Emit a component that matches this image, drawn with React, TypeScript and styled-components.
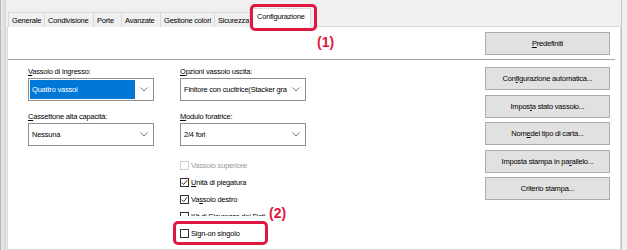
import React from "react";
import styled, { createGlobalStyle } from "styled-components";

const Red = "#e0173f";

type Tab = { label: string; width: number };

const tabs: Tab[] = [
  { label: "Generale", width: 37 },
  { label: "Condivisione", width: 50 },
  { label: "Porte", width: 29 },
  { label: "Avanzate", width: 40 },
  { label: "Gestione colori", width: 55 },
  { label: "Sicurezza", width: 39 },
];

const sideButtons: [string, string, string][] = [
  ["Con", "f", "igurazione automatica..."],
  ["Impos", "t", "a stato vassoio..."],
  ["Nom", "e", " del tipo di carta..."],
  ["Imposta stampa in pa", "r", "allelo..."],
  ["", "", "Criterio stampa..."],
];

const GlobalStyle = createGlobalStyle`
  html, body {
    margin: 0;
    padding: 0;
    background: #f0f0f0;
  }
`;

const Chevron = () => (
  <svg width="8" height="5" viewBox="0 0 8 5">
    <polyline points="0.5,0.5 4,4 7.5,0.5" fill="none" stroke="#707070" strokeWidth="0.9" />
  </svg>
);

const Tick = ({ color }: { color: string }) => (
  <svg width="7" height="7" viewBox="0 0 7 7">
    <polyline points="0.8,3.6 2.6,5.5 6.3,1.2" fill="none" stroke={color} strokeWidth="1" />
  </svg>
);

type SelectProps = { value: string; highlighted?: boolean };

const Select = ({ value, highlighted }: SelectProps) => (
  <SelectBox>
    <SelectValue $highlighted={highlighted}>{value}</SelectValue>
    <SelectArrow>
      <Chevron />
    </SelectArrow>
  </SelectBox>
);

type CheckProps = { children: React.ReactNode; checked?: boolean; disabled?: boolean };

const Check = ({ children, checked, disabled }: CheckProps) => (
  <CheckRow $disabled={disabled}>
    <CheckBox $disabled={disabled}>{checked && <Tick color="#333" />}</CheckBox>
    <span>{children}</span>
  </CheckRow>
);

const App = () => {
  return (
    <Screen>
      <GlobalStyle />
      <LeftEdge />
      <Dialog>
        <TabStrip>
          {tabs.map((t) => (
            <TabItem key={t.label} $width={t.width}>
              {t.label}
            </TabItem>
          ))}
          <ActiveTab>Configurazione</ActiveTab>
        </TabStrip>
        <Panel>
          <TopBar>
            <Button>
              <u>P</u>redefiniti
            </Button>
          </TopBar>
          <Separator />
          <Body>
            <Column>
              <Field>
                <FieldLabel>
                  <u>V</u>assoio di ingresso:
                </FieldLabel>
                <Select value="Quattro vassoi" highlighted />
              </Field>
              <Field>
                <FieldLabel>
                  <u>C</u>assettone alta capacità:
                </FieldLabel>
                <Select value="Nessuna" />
              </Field>
            </Column>
            <Column $offset>
              <Field>
                <FieldLabel>
                  <u>O</u>pzioni vassoio uscita:
                </FieldLabel>
                <Select value="Finitore con cucitrice(Stacker grande)" />
              </Field>
              <Field>
                <FieldLabel>
                  <u>M</u>odulo foratrice:
                </FieldLabel>
                <Select value="2/4 fori" />
              </Field>
              <CheckList>
                <Check disabled>Vassoio superiore</Check>
                <Check checked>
                  <u>U</u>nità di piegatura
                </Check>
                <Check checked>
                  Va<u>s</u>soio destro
                </Check>
                <ClippedRow>
                  <Check>Kit di Sicurezza dei Dati</Check>
                </ClippedRow>
                <Check>Sign-on singolo</Check>
              </CheckList>
            </Column>
            <ButtonColumn>
              {sideButtons.map(([a, key, b]) => (
                <Button key={a + b}>
                  {a}
                  {key && <u>{key}</u>}
                  {b}
                </Button>
              ))}
            </ButtonColumn>
          </Body>
        </Panel>
      </Dialog>
      <RightEdge />

      <Callout $left={250} $top={4} $width={67} $height={27} />
      <CalloutNumber $left={317} $top={34}>(1)</CalloutNumber>
      <Callout $left={173} $top={221} $width={95} $height={24} />
      <CalloutNumber $left={269} $top={205}>(2)</CalloutNumber>
    </Screen>
  );
};

const Screen = styled.div`
  position: relative;
  width: 627px;
  height: 250px;
  overflow: hidden;
  display: flex;
  background: #f0f0f0;
  font-family: "Liberation Sans", Arial, sans-serif;
  font-size: 7.5px;
  letter-spacing: -0.2px;
  color: #000;
`;

const LeftEdge = styled.div`
  width: 6px;
  flex: none;
  box-sizing: border-box;
  border-left: 1px solid #b8b8b8;
  border-right: 1px solid #d4d4d4;
  background: linear-gradient(90deg, #e9e9e9, #dcdcdc);
`;

const RightEdge = styled.div`
  width: 6px;
  flex: none;
  box-sizing: border-box;
  border-left: 1px solid #c6c6c6;
`;

const Dialog = styled.div`
  flex: 1;
  display: flex;
  flex-direction: column;
  padding: 12px 0 0 1px;
  min-width: 0;
`;

const TabStrip = styled.div`
  position: relative;
  z-index: 1;
  display: flex;
  align-items: flex-end;
  height: 15px;
  margin: 0 0 -1px 1px;
`;

const TabItem = styled.div<{ $width: number }>`
  box-sizing: border-box;
  width: ${(p) => p.$width}px;
  height: 15px;
  margin-right: -1px;
  padding-left: 3px;
  display: flex;
  align-items: center;
  white-space: nowrap;
  overflow: hidden;
  background: #f0f0f0;
  border: 1px solid #d9d9d9;
  border-bottom: none;

  &:last-child {
    padding-left: 5px;
  }
`;

const ActiveTab = styled.div`
  position: relative;
  z-index: 2;
  box-sizing: border-box;
  width: 62px;
  height: 19px;
  margin-left: -3px;
  padding: 0 0 3px 7px;
  display: flex;
  align-items: center;
  white-space: nowrap;
  background: #fff;
  border: 1px solid #d9d9d9;
  border-bottom: none;
`;

const Panel = styled.div`
  flex: 1;
  display: flex;
  flex-direction: column;
  background: #fff;
  border: 1px solid #d9d9d9;
`;

const TopBar = styled.div`
  height: 32px;
  box-sizing: border-box;
  display: flex;
  justify-content: flex-end;
  align-items: flex-start;
  padding: 5px 10px 0 0;
`;

const Separator = styled.div`
  height: 1px;
  margin-right: 5px;
  background: #a8a8a8;
`;

const Body = styled.div`
  display: flex;
  align-items: flex-start;
  padding: 7px 10px 0 20px;
`;

const Column = styled.div<{ $offset?: boolean }>`
  width: 126px;
  display: flex;
  flex-direction: column;
  gap: 11px;
  margin-left: ${(p) => (p.$offset ? "26px" : "0")};
`;

const Field = styled.div`
  display: flex;
  flex-direction: column;
  gap: 1px;
`;

const FieldLabel = styled.div`
  height: 10px;
  line-height: 10px;
  white-space: nowrap;
`;

const SelectBox = styled.div`
  height: 23px;
  box-sizing: border-box;
  display: flex;
  padding: 1px;
  border: 1px solid #8e8e8e;
  background: #fff;
`;

const SelectValue = styled.div<{ $highlighted?: boolean }>`
  flex: 1;
  min-width: 0;
  display: flex;
  align-items: center;
  padding-left: 2px;
  white-space: nowrap;
  overflow: hidden;
  background: ${(p) => (p.$highlighted ? "#0078d7" : "transparent")};
  color: ${(p) => (p.$highlighted ? "#fff" : "#000")};
`;

const SelectArrow = styled.div`
  width: 17px;
  flex: none;
  display: flex;
  align-items: center;
  justify-content: center;
`;

const CheckList = styled.div`
  display: flex;
  flex-direction: column;
`;

const CheckRow = styled.div<{ $disabled?: boolean }>`
  height: 17px;
  flex: none;
  display: flex;
  align-items: center;
  gap: 2px;
  white-space: nowrap;
  color: ${(p) => (p.$disabled ? "#9a9a9a" : "#000")};
`;

const CheckBox = styled.span<{ $disabled?: boolean }>`
  width: 9px;
  height: 9px;
  box-sizing: border-box;
  display: flex;
  align-items: center;
  justify-content: center;
  border: 1px solid ${(p) => (p.$disabled ? "#cfcfcf" : "#333")};
  background: #fff;
`;

/* the row is half hidden behind the next one in the original dialog */
const ClippedRow = styled.div`
  height: 17px;
  flex: none;
  overflow: hidden;

  & > * {
    clip-path: inset(0 0 9px 0);
  }
`;

const ButtonColumn = styled.div`
  margin-left: auto;
  width: 125px;
  display: flex;
  flex-direction: column;
  gap: 4.5px;
`;

const Button = styled.div`
  width: 125px;
  height: 23px;
  box-sizing: border-box;
  display: flex;
  align-items: center;
  justify-content: center;
  white-space: nowrap;
  background: #e1e1e1;
  border: 1px solid #adadad;
`;

const Callout = styled.div<{ $left: number; $top: number; $width: number; $height: number }>`
  position: absolute;
  z-index: 5;
  left: ${(p) => p.$left}px;
  top: ${(p) => p.$top}px;
  width: ${(p) => p.$width}px;
  height: ${(p) => p.$height}px;
  box-sizing: border-box;
  border: 3px solid ${Red};
  border-radius: 5px;
`;

const CalloutNumber = styled.div<{ $left: number; $top: number }>`
  position: absolute;
  z-index: 5;
  left: ${(p) => p.$left}px;
  top: ${(p) => p.$top}px;
  font-family: "Liberation Sans", Arial, sans-serif;
  font-size: 14px;
  font-weight: bold;
  line-height: 16px;
  letter-spacing: 0;
  color: ${Red};
`;

export default App;
